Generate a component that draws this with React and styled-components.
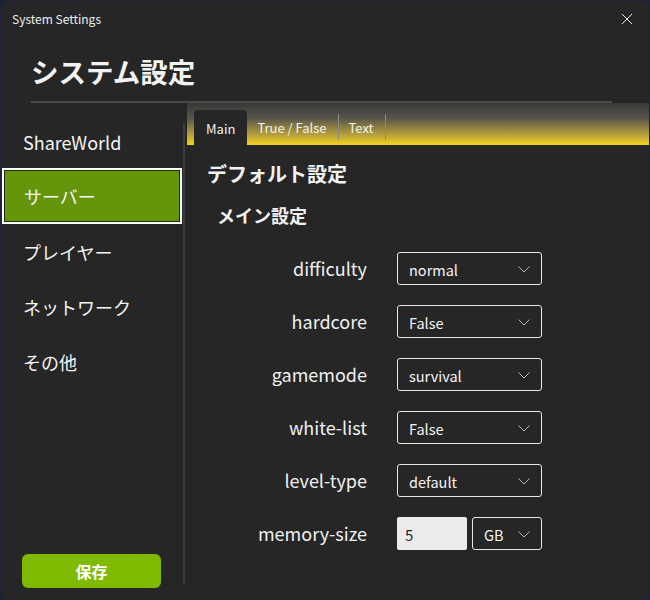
import React from "react";
import styled, { createGlobalStyle } from "styled-components";

const GlobalStyle = createGlobalStyle`
  html, body {
    margin: 0;
    padding: 0;
    background: #1c2238;
  }
  body {
    font-family: "Noto Sans CJK JP", "Noto Sans", sans-serif;
    color: #f2f2f2;
  }
`;

const Window = styled.div`
  width: 648px;
  height: 599px;
  margin: 1px 0 0 1px;
  background: #262626;
  border-radius: 8px;
  overflow: hidden;
  display: flex;
  flex-direction: column;
  box-sizing: border-box;
`;

const TitleBar = styled.div`
  height: 34px;
  flex-shrink: 0;
  display: flex;
  align-items: center;
  justify-content: space-between;
  padding: 0 16px 0 11px;
  font-size: 12px;
  color: #f0f0f0;
`;

const CloseButton = styled.div`
  width: 12px;
  height: 12px;
  display: flex;
  margin-top: 1px;
`;

const Header = styled.div`
  padding: 16px 37px 0 30px;
  flex-shrink: 0;
`;

const HeaderTitle = styled.h1`
  margin: 0;
  font-size: 27.5px;
  font-weight: 700;
  line-height: 40px;
  padding-bottom: 10px;
  border-bottom: 2px solid #4a4a4a;
`;

const Body = styled.div`
  flex: 1;
  display: flex;
  min-height: 0;
`;

const Sidebar = styled.div`
  width: 182px;
  display: flex;
  flex-direction: column;
  padding-top: 11px;
  padding-bottom: 12px;
  box-sizing: border-box;
`;

const NavItem = styled.div`
  height: 55px;
  display: flex;
  align-items: center;
  padding-left: ${p => (p.$active ? "20px" : "22px")};
  font-size: 18px;
  color: #f4f4f4;
  box-sizing: border-box;
  ${p =>
    p.$active &&
    `
    margin: -1px 1px 0 1px;
    height: 56px;
    background: #64950a;
    border: 2px solid #ffffff;
    box-shadow: inset 0 0 0 1px #1e2a05;
  `}
`;

const SaveButton = styled.button`
  margin: auto 0 0 21px;
  width: 139px;
  height: 34px;
  border: none;
  border-radius: 6px;
  background: #7fba00;
  color: #ffffff;
  font-family: "Noto Sans CJK JP", sans-serif;
  font-size: 16px;
  font-weight: 700;
`;

const Divider = styled.div`
  width: 2px;
  background: #3e3e3e;
  margin: 20px 2px 17px 0;
`;

const Main = styled.div`
  flex: 1;
  display: flex;
  flex-direction: column;
`;

const TabBand = styled.div`
  height: 42px;
  display: flex;
  align-items: flex-end;
  padding-left: 7px;
  background: linear-gradient(
    to bottom,
    #383838 0%,
    #55534a 35%,
    #b59f3c 75%,
    #f3d21a 100%
  );
`;

const Tab = styled.div`
  height: ${p => (p.$active ? "35px" : "26px")};
  display: flex;
  align-items: center;
  padding: ${p => (p.$active ? "2px 12px 0" : "0 11px 0 10px")};
  margin-bottom: ${p => (p.$active ? "0" : "5px")};
  font-size: 13px;
  color: #f2f2f2;
  background: ${p => (p.$active ? "#262626" : "transparent")};
  border-right: ${p => (p.$sep ? "1px solid #8a8a8a" : "none")};
  border-radius: ${p => (p.$active ? "4px 4px 0 0" : "0")};
  box-sizing: border-box;
`;

const Content = styled.div`
  padding: 14px 0 0 20px;
`;

const SectionTitle = styled.div`
  font-size: 20px;
  font-weight: 700;
  line-height: 30px;
`;

const SubTitle = styled.div`
  font-size: 18px;
  font-weight: 700;
  line-height: 28px;
  margin: 12px 0 0 10px;
`;

const Form = styled.div`
  display: grid;
  grid-template-columns: 160px 145px;
  column-gap: 30px;
  row-gap: 20px;
  margin-top: 23px;
`;

const Label = styled.div`
  text-align: right;
  font-size: 18px;
  line-height: 33px;
  color: #f0f0f0;
`;

const Controls = styled.div`
  display: flex;
  gap: 5px;
`;

const Select = styled.div`
  flex: 1;
  height: 33px;
  box-sizing: border-box;
  border: 1px solid #e6e6e6;
  border-radius: 3px;
  display: flex;
  align-items: center;
  justify-content: space-between;
  padding: 2px 11px 0 11px;
  font-size: 14.5px;
  color: #f4f4f4;
`;

const NumberInput = styled.div`
  width: 70px;
  height: 33px;
  flex-shrink: 0;
  box-sizing: border-box;
  background: #ebebeb;
  border-radius: 2px;
  display: flex;
  align-items: center;
  padding: 2px 0 0 8px;
  font-size: 15px;
  color: #1e1e1e;
`;

const Chevron = () => (
  <svg width="12" height="7" viewBox="0 0 12 7">
    <polyline
      points="0.5,0.5 6,6 11.5,0.5"
      fill="none"
      stroke="#b4b4b4"
      strokeWidth="1"
    />
  </svg>
);

const rows = [
  { label: "difficulty", value: "normal" },
  { label: "hardcore", value: "False" },
  { label: "gamemode", value: "survival" },
  { label: "white-list", value: "False" },
  { label: "level-type", value: "default" }
];

const navItems = ["ShareWorld", "サーバー", "プレイヤー", "ネットワーク", "その他"];

export default function App() {
  return (
    <>
      <GlobalStyle />
      <Window>
        <TitleBar>
          <span>System Settings</span>
          <CloseButton>
            <svg width="12" height="12" viewBox="0 0 12 12">
              <path d="M1 1 L11 11 M11 1 L1 11" stroke="#e8e8e8" strokeWidth="1" />
            </svg>
          </CloseButton>
        </TitleBar>
        <Header>
          <HeaderTitle>システム設定</HeaderTitle>
        </Header>
        <Body>
          <Sidebar>
            {navItems.map((item, i) => (
              <NavItem key={item} $active={i === 1}>
                {item}
              </NavItem>
            ))}
            <SaveButton>保存</SaveButton>
          </Sidebar>
          <Divider />
          <Main>
            <TabBand>
              <Tab $active>Main</Tab>
              <Tab $sep>True / False</Tab>
              <Tab $sep>Text</Tab>
            </TabBand>
            <Content>
              <SectionTitle>デフォルト設定</SectionTitle>
              <SubTitle>メイン設定</SubTitle>
              <Form>
                {rows.map(r => (
                  <React.Fragment key={r.label}>
                    <Label>{r.label}</Label>
                    <Controls>
                      <Select>
                        <span>{r.value}</span>
                        <Chevron />
                      </Select>
                    </Controls>
                  </React.Fragment>
                ))}
                <Label>memory-size</Label>
                <Controls>
                  <NumberInput>5</NumberInput>
                  <Select>
                    <span>GB</span>
                    <Chevron />
                  </Select>
                </Controls>
              </Form>
            </Content>
          </Main>
        </Body>
      </Window>
    </>
  );
}
